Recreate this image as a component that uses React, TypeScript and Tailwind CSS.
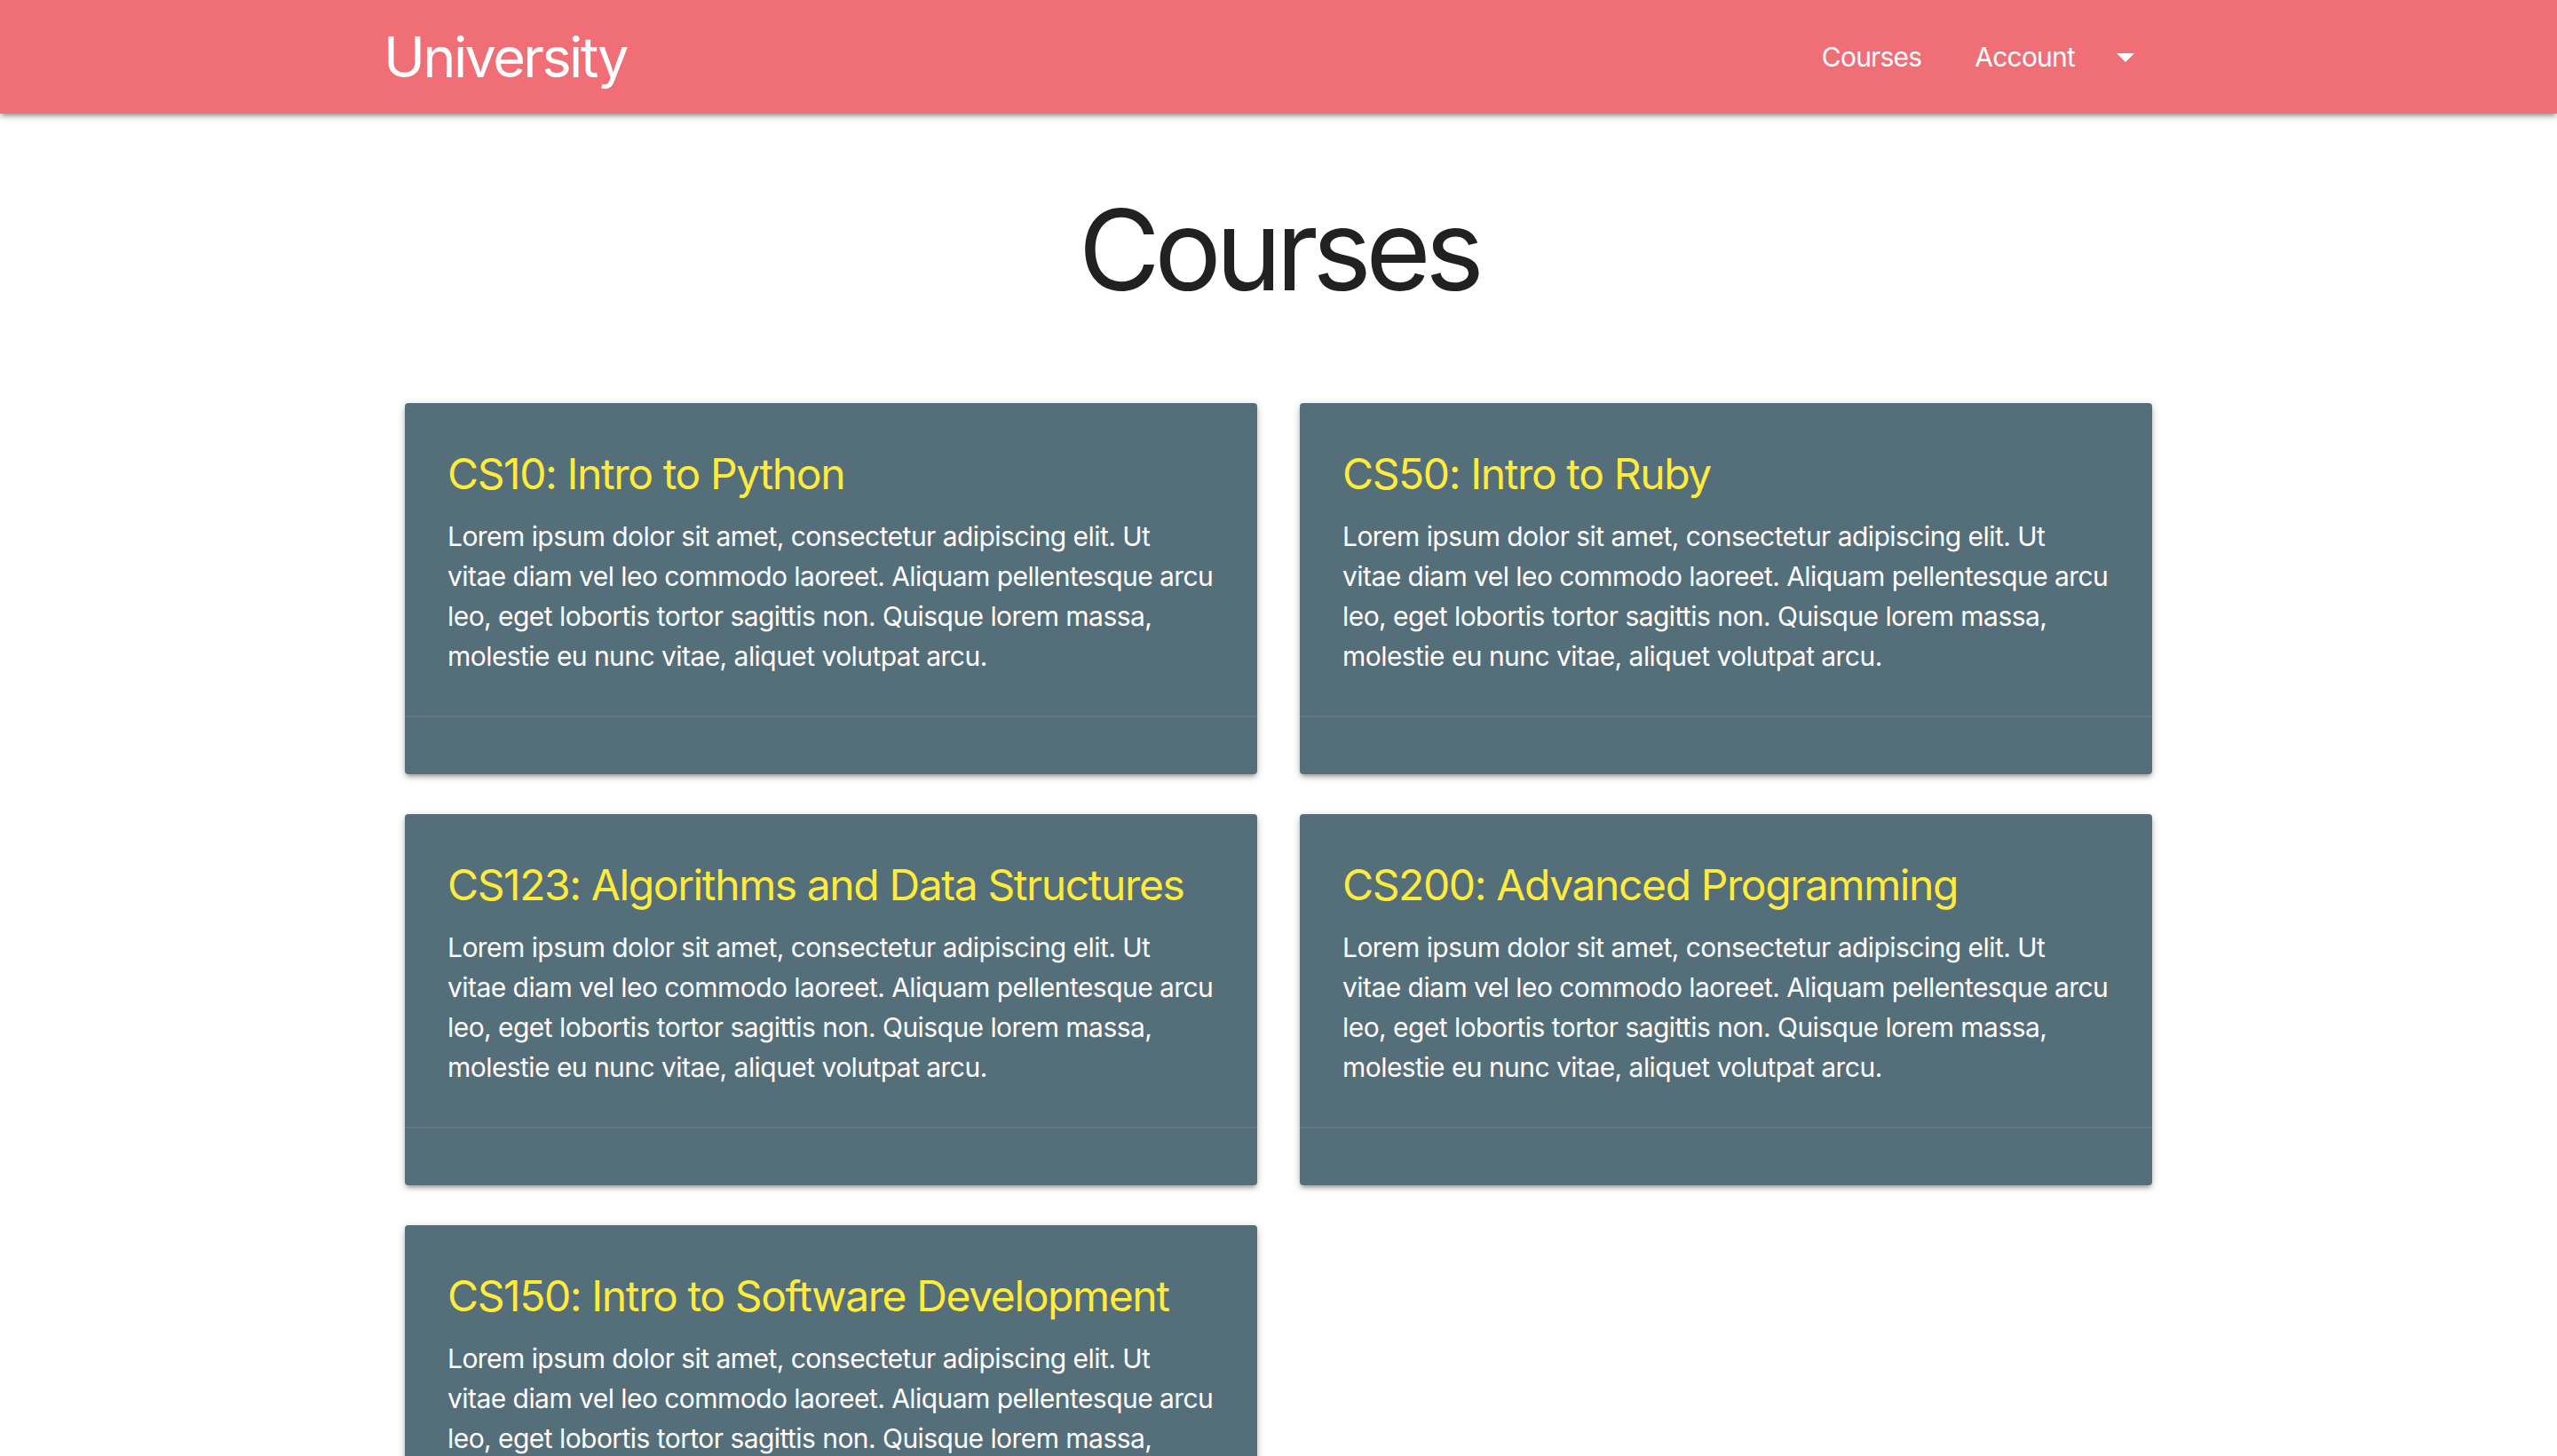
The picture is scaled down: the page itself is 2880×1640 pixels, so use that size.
const courses = [
  "CS10: Intro to Python",
  "CS50: Intro to Ruby",
  "CS123: Algorithms and Data Structures",
  "CS200: Advanced Programming",
  "CS150: Intro to Software Development",
];

// wrapped the way the design shows it
const loremLines = [
  "Lorem ipsum dolor sit amet, consectetur adipiscing elit. Ut",
  "vitae diam vel leo commodo laoreet. Aliquam pellentesque arcu",
  "leo, eget lobortis tortor sagittis non. Quisque lorem massa,",
  "molestie eu nunc vitae, aliquet volutpat arcu.",
];

function Navbar() {
  return (
    <nav className="relative z-10 h-[128px] bg-[#f06e75] shadow-[0_4px_4px_0_rgba(0,0,0,0.14),0_6px_2px_-4px_rgba(0,0,0,0.12),0_2px_10px_0_rgba(0,0,0,0.2)]">
      <div className="mx-auto flex h-full w-[2016px] items-center justify-between">
        <a href="#" className="text-[63px] leading-[128px] tracking-[-2.6px] text-white">University</a>
        <ul className="flex h-full items-center">
          <li>
            <a href="#" className="block px-[30px] text-[30px] leading-[128px] tracking-[-0.8px] text-white">Courses</a>
          </li>
          <li>
            <a href="#" className="flex items-center px-[30px] text-[30px] leading-[128px] tracking-[-0.8px] text-white">
              Account
              <svg width="48" height="48" viewBox="0 0 24 24" className="ml-[33px] fill-white">
                <path d="M7 10l5 5 5-5z" />
              </svg>
            </a>
          </li>
        </ul>
      </div>
    </nav>
  );
}

function CourseCard({ title }: { title: string }) {
  return (
    <div className="rounded-[4px] bg-[#546e7a] shadow-[0_4px_4px_0_rgba(0,0,0,0.14),0_6px_2px_-4px_rgba(0,0,0,0.12),0_2px_10px_0_rgba(0,0,0,0.2)]">
      <div className="p-[48px] pb-[44px]">
        <span className="mb-[16px] block text-[48px] leading-[64px] tracking-[-1.4px] text-[#ffeb3b]">{title}</span>
        <p className="text-[30px] leading-[45px] tracking-[-0.55px] text-white">
          {loremLines.map((l) => (
            <span key={l} className="block whitespace-nowrap">{l}</span>
          ))}
        </p>
      </div>
      <div className="h-[66px] border-t-2 border-[rgba(160,160,160,0.2)]" />
    </div>
  );
}

export default function App() {
  return (
    <div className="min-h-screen bg-white font-['Inter','Liberation_Sans',sans-serif]">
      <Navbar />
      <main className="mx-auto w-[2016px]">
        <h1 className="mt-[84px] mb-[103px] text-center text-[126px] leading-[1.1] tracking-[-6.5px] text-[#212121]">Courses</h1>
        <div className="grid grid-cols-2 gap-x-[48px] gap-y-[45px] px-[24px]">
          {courses.map((c) => (
            <CourseCard key={c} title={c} />
          ))}
        </div>
      </main>
    </div>
  );
}
